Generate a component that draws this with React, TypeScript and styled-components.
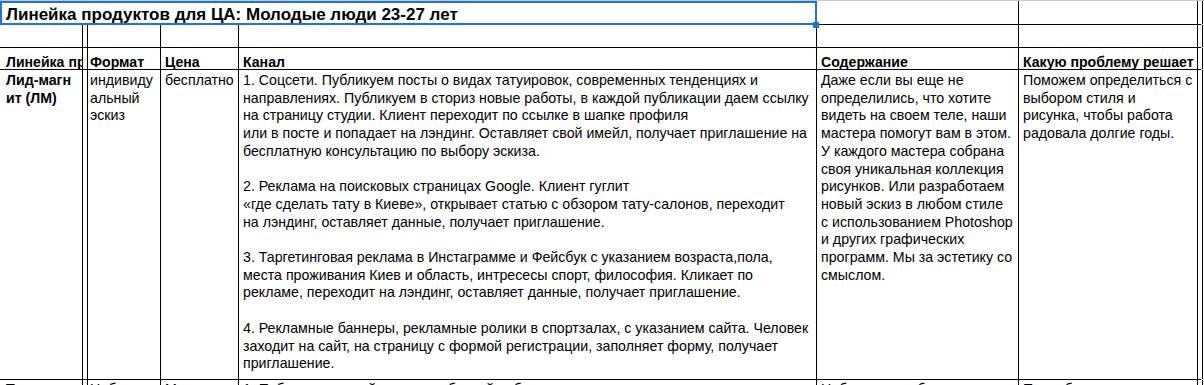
import React from 'react';
import styled, { createGlobalStyle } from 'styled-components';

const GlobalStyle = createGlobalStyle`
  html, body {
    margin: 0;
    padding: 0;
    background: #fff;
    overflow: hidden;
  }
  body {
    font-family: "Liberation Sans", Arial, sans-serif;
    color: #000;
  }
`;

// column widths include the 1px right border of each cell
const COLUMNS = '83px 3px 75px 78px 578px 202px 179px 3px 1fr';

const Sheet = styled.div`
  display: grid;
  grid-template-columns: ${COLUMNS};
  grid-template-rows: 24px 23px 22px 310px 40px;
  border-top: 1px solid #c8c8c8;
  width: 1204px;
`;

const Cell = styled.div<{ $bold?: boolean; $pl?: number; $edge?: boolean }>`
  box-sizing: border-box;
  border-right: ${p => (p.$edge ? 'none' : '1px solid #000')};
  border-bottom: 1px solid ${p => (p.$edge ? '#d4d4d4' : '#000')};
  padding-left: ${p => p.$pl ?? 4}px;
  overflow: hidden;
  white-space: pre;
  font-size: 14.2px;
  font-weight: ${p => (p.$bold ? 700 : 400)};
  line-height: 17.7px;
`;

const HeaderCell = styled(Cell)`
  padding-top: 6px;
  font-size: 14.1px;
  line-height: 16px;
`;

const BodyCell = styled(Cell)`
  padding-top: 2px;
`;

const NextCell = styled(Cell)`
  padding-top: 3px;
  line-height: 13px;
`;

const TitleCell = styled.div`
  grid-column: 1 / 6;
  position: relative;
  box-sizing: border-box;
  padding: 4px 0 0 6px;
  box-shadow: inset 0 0 0 2px #1a73e8;
  font-size: 17px;
  font-weight: 700;
  line-height: 20px;
  white-space: nowrap;
`;

const Handle = styled.span`
  position: absolute;
  right: -2px;
  bottom: -3px;
  width: 6px;
  height: 6px;
  background: #1a73e8;
  z-index: 2;
`;

const kanal = [
  '1. Соцсети. Публикуем посты о видах татуировок, современных тенденциях и',
  'направлениях. Публикуем в сториз новые работы, в каждой публикации даем ссылку',
  'на страницу студии. Клиент переходит по ссылке в шапке профиля',
  'или в посте и попадает на лэндинг. Оставляет свой имейл, получает приглашение на',
  'бесплатную консультацию по выбору эскиза.',
  '',
  '2. Реклама на поисковых страницах Google. Клиент гуглит',
  '«где сделать тату в Киеве», открывает статью с обзором тату-салонов, переходит',
  'на лэндинг, оставляет данные, получает приглашение.',
  '',
  '3. Таргетинговая реклама в Инстаграмме и Фейсбук с указанием возраста,пола,',
  'места проживания Киев и область, интресесы спорт, философия. Кликает по',
  'рекламе, переходит на лэндинг, оставляет данные, получает приглашение.',
  '',
  '4. Рекламные баннеры, рекламные ролики в спортзалах, с указанием сайта. Человек',
  'заходит на сайт, на страницу с формой регистрации, заполняет форму, получает',
  'приглашение.',
].join('\n');

const content = [
  'Даже если вы еще не',
  'определились, что хотите',
  'видеть на своем теле, наши',
  'мастера помогут вам в этом.',
  'У каждого мастера собрана',
  'своя уникальная коллекция',
  'рисунков. Или разработаем',
  'новый эскиз в любом стиле',
  'с использованием Photoshop',
  'и других графических',
  'программ. Мы за эстетику со',
  'смыслом.',
].join('\n');

const problem = [
  'Поможем определиться с',
  'выбором стиля и',
  'рисунка, чтобы работа',
  'радовала долгие годы.',
].join('\n');

const App: React.FC = () => {
  return (
    <>
      <GlobalStyle />
      <Sheet>
        {/* row 1: title, selected */}
        <TitleCell>
          Линейка продуктов для ЦА: Молодые люди 23-27 лет
          <Handle />
        </TitleCell>
        <Cell />
        <Cell />
        <Cell />
        <Cell $edge />

        {/* row 2: empty */}
        <Cell />
        <Cell />
        <Cell />
        <Cell />
        <Cell />
        <Cell />
        <Cell />
        <Cell />
        <Cell $edge />

        {/* row 3: headers */}
        <HeaderCell $bold $pl={6}>Линейка продуктов</HeaderCell>
        <HeaderCell />
        <HeaderCell $bold>Формат</HeaderCell>
        <HeaderCell $bold>Цена</HeaderCell>
        <HeaderCell $bold>Канал</HeaderCell>
        <HeaderCell $bold>Содержание</HeaderCell>
        <HeaderCell $bold>Какую проблему решает</HeaderCell>
        <HeaderCell />
        <HeaderCell $edge />

        {/* row 4: lead magnet */}
        <BodyCell $bold $pl={6}>{'Лид-магн\nит (ЛМ)'}</BodyCell>
        <BodyCell />
        <BodyCell>{'индивиду\nальный\nэскиз'}</BodyCell>
        <BodyCell>бесплатно</BodyCell>
        <BodyCell>{kanal}</BodyCell>
        <BodyCell>{content}</BodyCell>
        <BodyCell>{problem}</BodyCell>
        <BodyCell />
        <BodyCell $edge />

        {/* row 5: next product, cut off by the window */}
        <NextCell $bold $pl={6}>Трипваер</NextCell>
        <NextCell />
        <NextCell>Набор</NextCell>
        <NextCell>Мини-тату</NextCell>
        <NextCell>1. Публикуем новый пост с подборкой работ</NextCell>
        <NextCell>Небольшие работы</NextCell>
        <NextCell>Попробовать</NextCell>
        <NextCell />
        <NextCell $edge />
      </Sheet>
    </>
  );
};

export default App;
